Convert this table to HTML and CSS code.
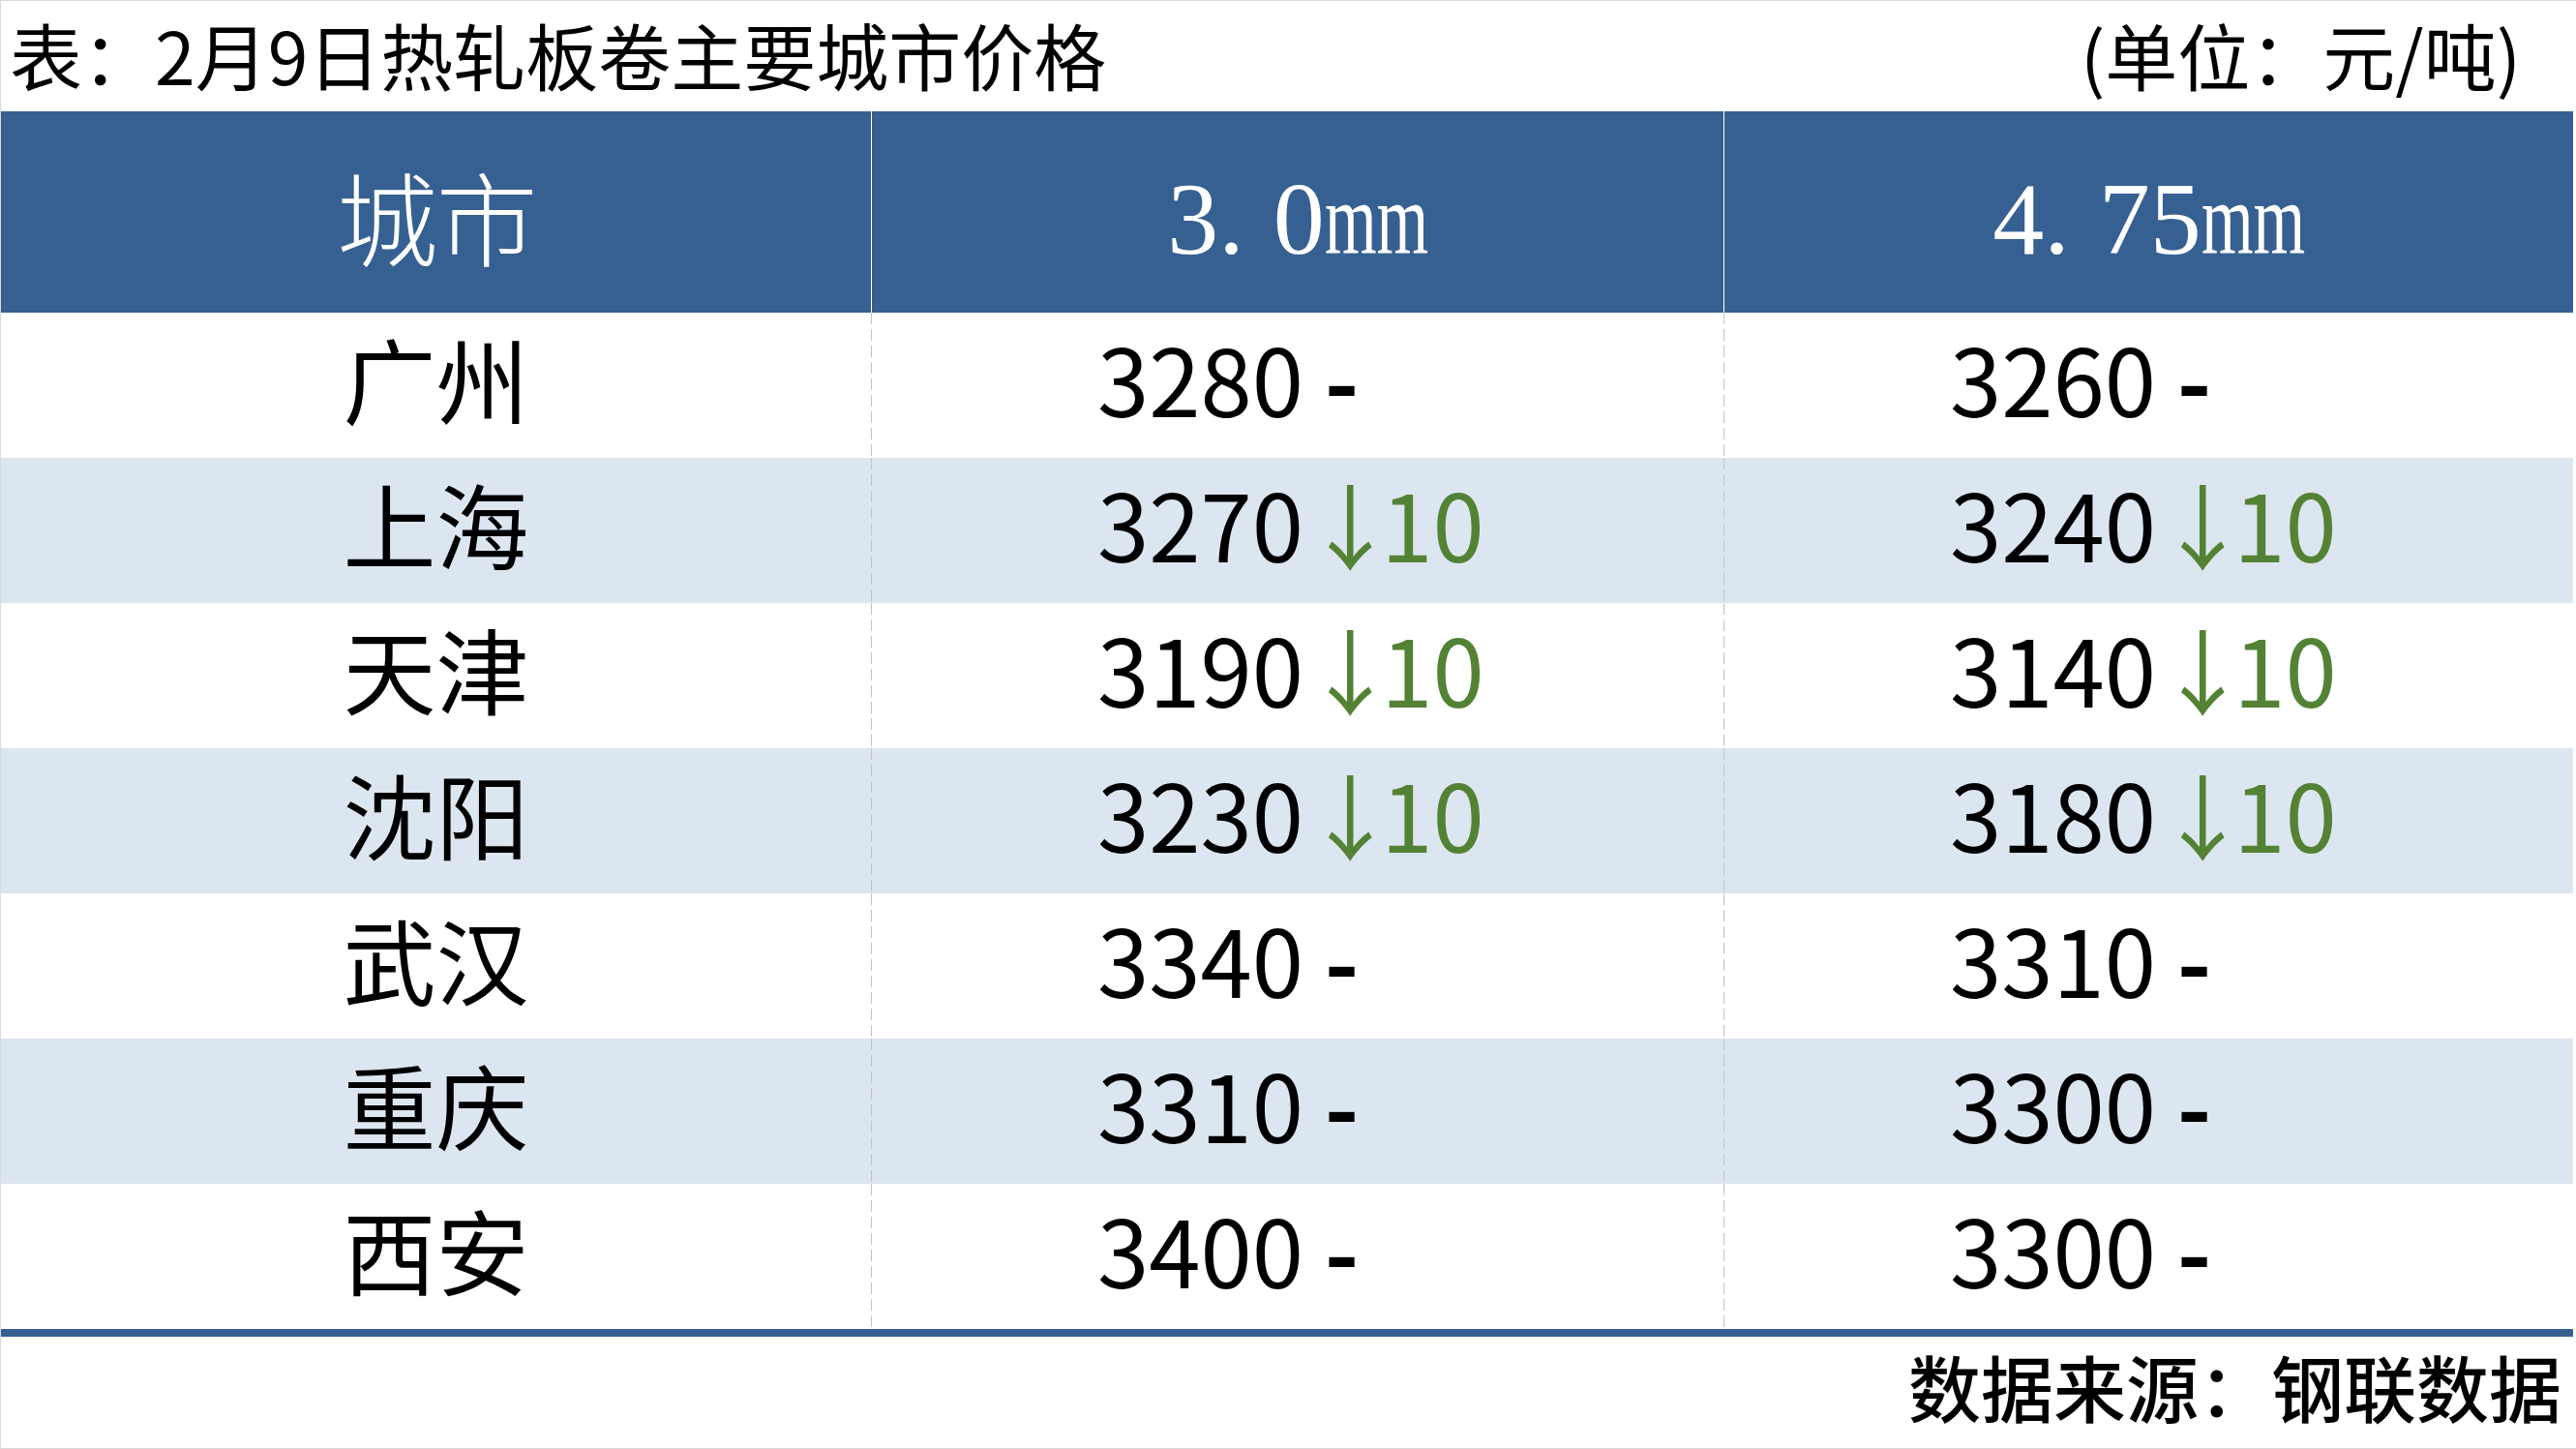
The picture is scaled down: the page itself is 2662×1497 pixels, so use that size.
FILE: index.html
```html
<!DOCTYPE html>
<html lang="zh-CN">
<head>
<meta charset="utf-8">
<title>热轧板卷主要城市价格</title>
<link rel="stylesheet" href="styles.css">
</head>
<body>
<div class="page">
  <div class="titlebar">
    <span class="title">表：2月9日热轧板卷主要城市价格</span>
    <span class="unit">(单位：元/吨)</span>
  </div>
  <div class="table">
    <div class="row head">
      <div class="cell c1">城市</div>
      <div class="cell c2">3<span class="dot">.</span>0<span class="mm">mm</span></div>
      <div class="cell c3">4<span class="dot">.</span>75<span class="mm">mm</span></div>
    </div>
    <div class="row">
      <div class="cell c1">广州</div>
      <div class="cell c2">3280 <span class="dash">-</span></div>
      <div class="cell c3">3260 <span class="dash">-</span></div>
    </div>
    <div class="row alt">
      <div class="cell c1">上海</div>
      <div class="cell c2">3270<span class="down"><span class="arrow">↓</span>10</span></div>
      <div class="cell c3">3240<span class="down"><span class="arrow">↓</span>10</span></div>
    </div>
    <div class="row">
      <div class="cell c1">天津</div>
      <div class="cell c2">3190<span class="down"><span class="arrow">↓</span>10</span></div>
      <div class="cell c3">3140<span class="down"><span class="arrow">↓</span>10</span></div>
    </div>
    <div class="row alt">
      <div class="cell c1">沈阳</div>
      <div class="cell c2">3230<span class="down"><span class="arrow">↓</span>10</span></div>
      <div class="cell c3">3180<span class="down"><span class="arrow">↓</span>10</span></div>
    </div>
    <div class="row">
      <div class="cell c1">武汉</div>
      <div class="cell c2">3340 <span class="dash">-</span></div>
      <div class="cell c3">3310 <span class="dash">-</span></div>
    </div>
    <div class="row alt">
      <div class="cell c1">重庆</div>
      <div class="cell c2">3310 <span class="dash">-</span></div>
      <div class="cell c3">3300 <span class="dash">-</span></div>
    </div>
    <div class="row">
      <div class="cell c1">西安</div>
      <div class="cell c2">3400 <span class="dash">-</span></div>
      <div class="cell c3">3300 <span class="dash">-</span></div>
    </div>
  </div>
  <div class="footer">数据来源：钢联数据</div>
</div>
</body>
</html>
```

FILE: styles.css
```css
html, body {
  margin: 0;
  padding: 0;
  background: #ffffff;
}

.page {
  width: 2662px;
  height: 1497px;
  box-sizing: border-box;
  border-top: 1px solid #d9d9d9;
  border-left: 1px solid #d9d9d9;
  border-bottom: 1px solid #d9d9d9;
  padding-right: 3px;
  background: #ffffff;
  font-family: "Noto Sans CJK SC", "Noto Sans", sans-serif;
  color: #000000;
  display: flex;
  flex-direction: column;
  overflow: hidden;
}

.titlebar {
  height: 114px;
  flex: none;
  box-sizing: border-box;
  display: flex;
  justify-content: space-between;
  align-items: flex-start;
  padding: 0 54px 4px 9px;
  font-size: 75px;
  line-height: 110px;
  white-space: nowrap;
}

.table {
  flex: none;
  border-bottom: 8px solid #376092;
}

.row {
  display: grid;
  grid-template-columns: 899px 881px 1fr;
  height: 150px;
}

.row.alt {
  background: #dce6f1;
}

.cell {
  box-sizing: border-box;
  font-size: 96px;
  line-height: 134px;
  padding-bottom: 16px;
  white-space: nowrap;
}

.cell.c1 {
  text-align: center;
}

.cell.c2,
.cell.c3 {
  padding-left: 233px;
  background-image: repeating-linear-gradient(to bottom, #c3c3c3 0, #c3c3c3 12px, transparent 12px, transparent 17px);
  background-size: 1px 100%;
  background-repeat: no-repeat;
  background-position: left top;
  border-left: 1px solid transparent;
  background-origin: border-box;
}

.dash {
  font-weight: 700;
}

.down {
  color: #548235;
}

.arrow {
  letter-spacing: -16px;
}

.row.head {
  height: 208px;
  background: #376092;
  color: #ffffff;
}

.row.head .cell {
  padding: 16px 0 0 0;
  line-height: 192px;
  text-align: center;
  background-image: none;
}

.row.head .cell.c1 {
  font-size: 105px;
  font-weight: 300;
  padding-top: 10px;
  letter-spacing: -2px;
}

.row.head .cell.c2,
.row.head .cell.c3 {
  border-left: 1px solid #ffffff;
  font-family: "Liberation Serif", "DejaVu Serif", serif;
  font-size: 106px;
}

.dot {
  margin-right: 30px;
}

.mm {
  display: inline-block;
  transform: scaleX(0.65);
  transform-origin: left center;
  margin-right: -58px;
}

.footer {
  flex: 1;
  box-sizing: border-box;
  text-align: right;
  padding-right: 12px;
  font-size: 75px;
  font-weight: 500;
  line-height: 101px;
  white-space: nowrap;
}
```
